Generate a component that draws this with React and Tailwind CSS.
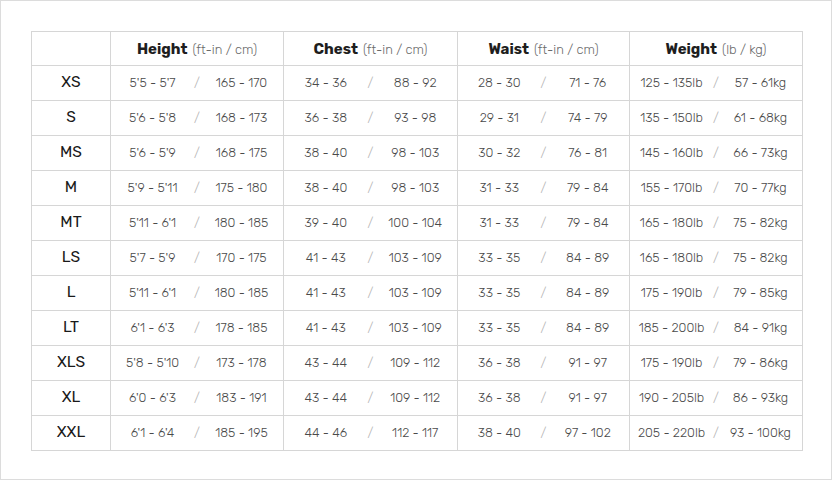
import React from 'react';

const rows = [
  ['XS', "5'5 - 5'7", '165 - 170', '34 - 36', '88 - 92', '28 - 30', '71 - 76', '125 - 135lb', '57 - 61kg'],
  ['S', "5'6 - 5'8", '168 - 173', '36 - 38', '93 - 98', '29 - 31', '74 - 79', '135 - 150lb', '61 - 68kg'],
  ['MS', "5'6 - 5'9", '168 - 175', '38 - 40', '98 - 103', '30 - 32', '76 - 81', '145 - 160lb', '66 - 73kg'],
  ['M', "5'9 - 5'11", '175 - 180', '38 - 40', '98 - 103', '31 - 33', '79 - 84', '155 - 170lb', '70 - 77kg'],
  ['MT', "5'11 - 6'1", '180 - 185', '39 - 40', '100 - 104', '31 - 33', '79 - 84', '165 - 180lb', '75 - 82kg'],
  ['LS', "5'7 - 5'9", '170 - 175', '41 - 43', '103 - 109', '33 - 35', '84 - 89', '165 - 180lb', '75 - 82kg'],
  ['L', "5'11 - 6'1", '180 - 185', '41 - 43', '103 - 109', '33 - 35', '84 - 89', '175 - 190lb', '79 - 85kg'],
  ['LT', "6'1 - 6'3", '178 - 185', '41 - 43', '103 - 109', '33 - 35', '84 - 89', '185 - 200lb', '84 - 91kg'],
  ['XLS', "5'8 - 5'10", '173 - 178', '43 - 44', '109 - 112', '36 - 38', '91 - 97', '175 - 190lb', '79 - 86kg'],
  ['XL', "6'0 - 6'3", '183 - 191', '43 - 44', '109 - 112', '36 - 38', '91 - 97', '190 - 205lb', '86 - 93kg'],
  ['XXL', "6'1 - 6'4", '185 - 195', '44 - 46', '112 - 117', '38 - 40', '97 - 102', '205 - 220lb', '93 - 100kg'],
];

const headers = [
  ['Height', '(ft-in / cm)', 'w-[173px]'],
  ['Chest', '(ft-in / cm)', 'w-[174px]'],
  ['Waist', '(ft-in / cm)', 'w-[172px]'],
  ['Weight', '(lb / kg)', 'w-[173px]'],
];

const Pair = ({ a, b }) => (
  <div className="grid grid-cols-[1fr_auto_1fr] items-center">
    <span className="text-center">{a}</span>
    <span className="text-[#b5b5b5]">/</span>
    <span className="text-center">{b}</span>
  </div>
);

const App = () => {
  return (
    <div className="w-[832px] h-[480px] border border-[#dcdcdc] bg-white pl-[30px] pt-[30px] font-['Rubik','Open_Sans',sans-serif]">
      <table className="border-collapse table-fixed w-[771px]">
        <thead>
          <tr className="h-[34px]">
            <th className="w-[79px] border border-[#d6d6d6]"></th>
            {headers.map(([title, unit, w]) => (
              <th key={title} className={`${w} border border-[#d6d6d6] text-center whitespace-nowrap`}>
                <span className="text-[15px] font-bold text-[#1e1e1e] mr-[5px]">{title}</span>
                <span className="text-[13px] font-light text-[#6a6a6a]">{unit}</span>
              </th>
            ))}
          </tr>
        </thead>
        <tbody>
          {rows.map((r) => (
            <tr key={r[0]} className="h-[35px]">
              <td className="border border-[#d6d6d6] text-center text-[15.5px] text-[#1a1a1a]">{r[0]}</td>
              {[1, 3, 5, 7].map((i) => (
                <td key={i} className="border border-[#d6d6d6] text-[12.7px] font-light text-[#4a4a4a] whitespace-nowrap">
                  <Pair a={r[i]} b={r[i + 1]} />
                </td>
              ))}
            </tr>
          ))}
        </tbody>
      </table>
    </div>
  );
};

export default App;
